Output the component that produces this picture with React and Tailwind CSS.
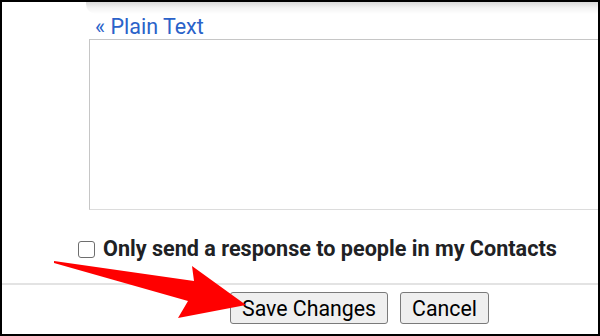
export default function App() {
  return (
    <div className="relative w-[600px] h-[336px] overflow-hidden border-2 border-black bg-white font-['Roboto',sans-serif] flex flex-col">
      {/* header shadow from the card above */}
      <div className="h-[12px] ml-[84px] rounded-bl-[10px] bg-gradient-to-b from-[#d9d9d9] via-[#f3f3f3] to-white" />

      <div className="pl-[93px] text-[21.5px] leading-[25px] text-[#2a62c9]">
        <a href="#">« Plain Text</a>
      </div>

      <div className="ml-[87px] h-[171px] border border-r-0 border-[#c6c6c6] border-b-[#dcdcdc]" />

      <label className="mt-[26px] pl-[76px] flex items-center gap-[8px] h-[26px]">
        <span className="w-[17px] h-[17px] rounded-[3px] border-[1.5px] border-[#6e6e6e] bg-white shrink-0" />
        <span className="text-[21.6px] font-bold text-[#202124] leading-[26px]">
          Only send a response to people in my Contacts
        </span>
      </label>

      <div className="mt-[21px] h-[2px] bg-[#e3e3e3]" />

      <div className="mt-[7px] pl-[228px] flex gap-[12px]">
        <button className="h-[32px] w-[158px] rounded-[3px] border border-[#7a7a7a] bg-[#efefef] text-[21.3px] text-black">
          Save Changes
        </button>
        <button className="h-[32px] w-[89px] rounded-[3px] border border-[#7a7a7a] bg-[#efefef] text-[21.3px] text-black">
          Cancel
        </button>
      </div>

      {/* red annotation arrow */}
      <svg className="absolute left-0 top-0 pointer-events-none" width="600" height="336" viewBox="0 0 600 336">
        <polygon
          points="52,259 192,279 190,264 244,303 176,316 186,299 52,261"
          fill="#ff0000"
        />
      </svg>
    </div>
  );
}
